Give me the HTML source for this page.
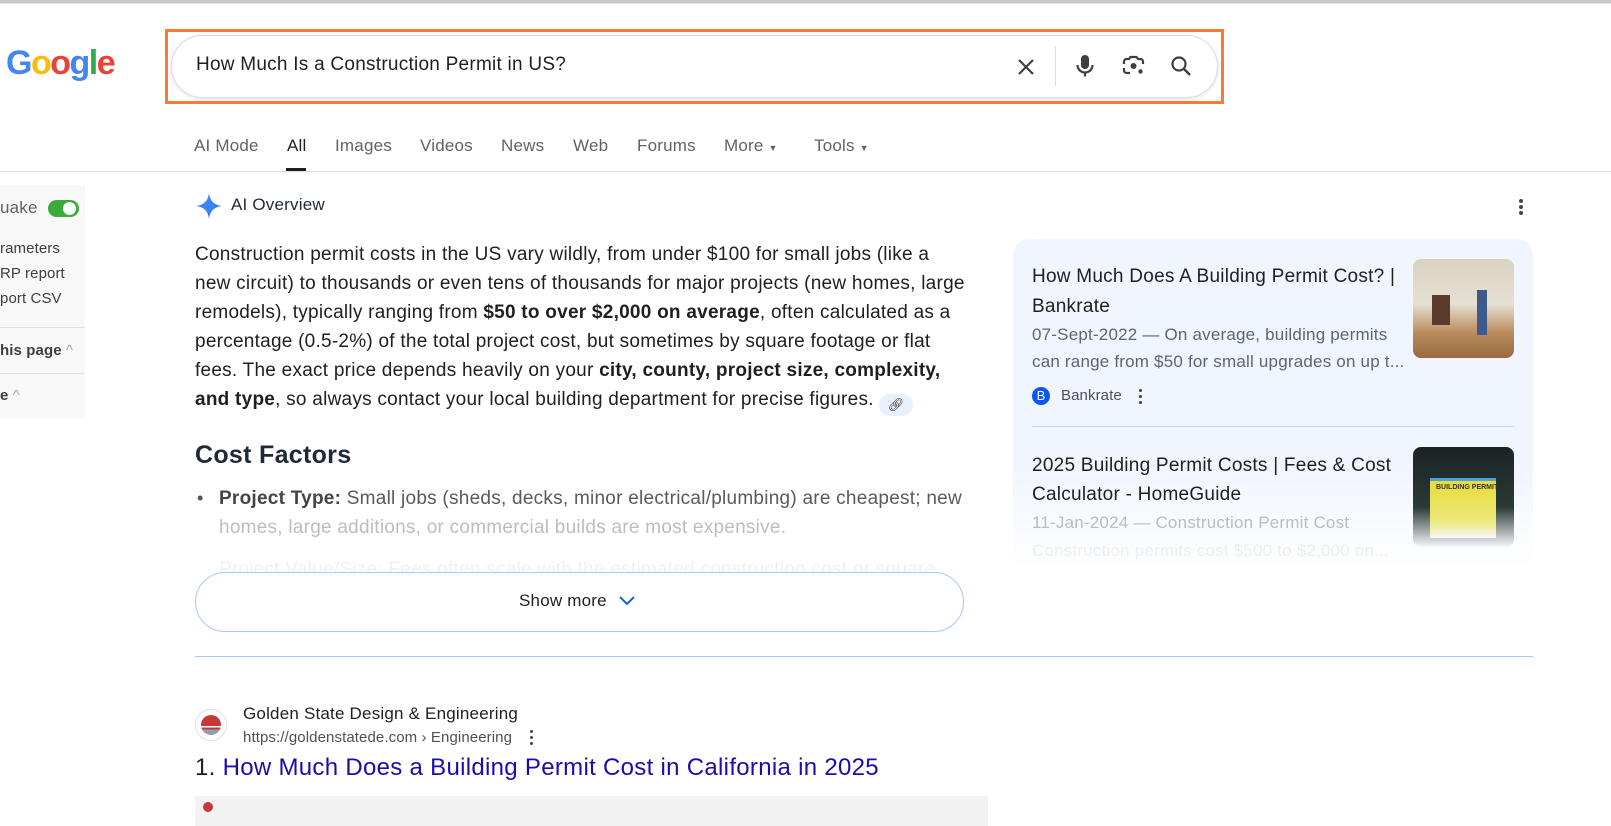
<!DOCTYPE html>
<html><head><meta charset="utf-8"><style>
*{margin:0;padding:0;box-sizing:border-box}
body{width:1611px;height:826px;overflow:hidden;background:#fff;font-family:"Liberation Sans",Arial,sans-serif;position:relative;color:#1f1f1f}
.a{position:absolute;white-space:nowrap}
.body{font-size:19px;letter-spacing:0.25px;line-height:29px;color:#1f1f1f}
.t16{font-size:17px;letter-spacing:0.2px}
.t14{font-size:15px;letter-spacing:0.1px}
</style></head><body>
<div class="a" style="left:0;top:0;width:1611px;height:3px;background:#c8c8c8"></div>
<div class="a" style="left:0;top:3px;width:1611px;height:1px;background:#e6e6e6"></div>
<div class="a" style="left:6px;top:44px;font-size:34px;letter-spacing:-1.5px;font-weight:bold"><span style="color:#4285f4">G</span><span style="color:#fbbc05">o</span><span style="color:#ea4335">o</span><span style="color:#4285f4">g</span><span style="color:#34a853">l</span><span style="color:#ea4335">e</span></div>
<div class="a" style="left:165px;top:29px;width:1059px;height:75px;border:3px solid #fb7a35"></div>
<div class="a" style="left:171px;top:35px;width:1047px;height:63px;border:1px solid #dadce0;border-radius:32px;box-shadow:0 1px 4px rgba(0,0,0,.12);background:#fff"></div>
<div class="a" style="left:196px;top:54px;font-size:19px;letter-spacing:0.25px;color:#1f1f1f">How Much Is a Construction Permit in US?</div>
<svg class="a" style="left:1014px;top:55px" width="24" height="24" viewBox="0 0 24 24"><path d="M5 5L19 19M19 5L5 19" stroke="#3c4043" stroke-width="2.2"/></svg>
<div class="a" style="left:1055px;top:46px;width:1px;height:40px;background:#dadce0"></div>
<svg class="a" style="left:1073px;top:53px" width="24" height="26" viewBox="0 0 24 26"><rect x="8" y="2" width="8" height="14" rx="4" fill="#3c4043"/><path d="M4.5 12a7.5 7.5 0 0 0 15 0" stroke="#3c4043" stroke-width="2.2" fill="none"/><path d="M12 19.5v4" stroke="#3c4043" stroke-width="2.2"/></svg>
<svg class="a" style="left:1121px;top:54px" width="25" height="24" viewBox="0 0 25 24"><path d="M3 10V7.5A2.5 2.5 0 0 1 5.5 5H8l1.5-2h6L17 5h2.5A2.5 2.5 0 0 1 22 7.5V10M3 14v2.5A2.5 2.5 0 0 0 5.5 19H9" stroke="#3c4043" stroke-width="2.2" fill="none"/><circle cx="12.5" cy="12" r="3" fill="#3c4043"/><circle cx="19.5" cy="17.5" r="2.2" fill="#3c4043"/></svg>
<svg class="a" style="left:1169px;top:54px" width="24" height="24" viewBox="0 0 24 24"><circle cx="10" cy="10" r="6.5" stroke="#3c4043" stroke-width="2.2" fill="none"/><path d="M15 15l6 6" stroke="#3c4043" stroke-width="2.4"/></svg>
<div class="a t16" style="left:194px;top:136px;color:#5f6368">AI Mode</div>
<div class="a t16" style="left:287px;top:136px;color:#1f1f1f">All</div>
<div class="a" style="left:286px;top:168px;width:20px;height:3px;background:#1f1f1f"></div>
<div class="a t16" style="left:335px;top:136px;color:#5f6368">Images</div>
<div class="a t16" style="left:420px;top:136px;color:#5f6368">Videos</div>
<div class="a t16" style="left:501px;top:136px;color:#5f6368">News</div>
<div class="a t16" style="left:573px;top:136px;color:#5f6368">Web</div>
<div class="a t16" style="left:637px;top:136px;color:#5f6368">Forums</div>
<div class="a t16" style="left:724px;top:136px;color:#5f6368">More <span style="font-size:9px">▼</span></div>
<div class="a t16" style="left:814px;top:136px;color:#5f6368">Tools <span style="font-size:9px">▼</span></div>
<div class="a" style="left:0;top:171px;width:1611px;height:1px;background:#dadce0"></div>
<div class="a" style="left:0;top:185px;width:85px;height:233px;background:#f8f8f8"></div>
<div class="a t16" style="left:0;top:198px;color:#5f6368">uake</div>
<div class="a" style="left:48px;top:200px;width:31px;height:17px;border-radius:9px;background:#3cab3c"></div>
<div class="a" style="left:63px;top:202px;width:13px;height:13px;border-radius:50%;background:#fff"></div>
<div class="a t14" style="left:0;top:240px;color:#3c4043">rameters</div>
<div class="a t14" style="left:0;top:265px;color:#3c4043">RP report</div>
<div class="a t14" style="left:0;top:290px;color:#3c4043">port CSV</div>
<div class="a" style="left:0;top:327px;width:85px;height:1px;background:#e0e0e0"></div>
<div class="a t14" style="left:0;top:342px;font-weight:bold;color:#3c4043">his page <span style="color:#aaa;font-weight:normal">^</span></div>
<div class="a" style="left:0;top:373px;width:85px;height:1px;background:#e0e0e0"></div>
<div class="a t14" style="left:0;top:387px;font-weight:bold;color:#3c4043">e <span style="color:#aaa;font-weight:normal">^</span></div>
<svg class="a" style="left:195px;top:192px" width="28" height="28" viewBox="0 0 28 28"><path d="M14 1C15 9 19 13 27 14C19 15 15 19 14 27C13 19 9 15 1 14C9 13 13 9 14 1Z" fill="#3b82f6"/></svg>
<div class="a t16" style="left:231px;top:195px;color:#1f2937">AI Overview</div>
<div class="a" style="left:1513px;top:198px;width:16px;height:20px;font-size:0">
<div style="margin:0 auto;width:4px;height:4px;border-radius:50%;background:#444;margin-top:1px"></div><div style="margin:2px auto;width:4px;height:4px;border-radius:50%;background:#444"></div><div style="margin:0 auto;width:4px;height:4px;border-radius:50%;background:#444"></div></div>
<div class="a body" style="left:195px;top:240px;white-space:nowrap">Construction permit costs in the US vary wildly, from under $100 for small jobs (like a<br>new circuit) to thousands or even tens of thousands for major projects (new homes, large<br>remodels), typically ranging from <b>$50 to over $2,000 on average</b>, often calculated as a<br>percentage (0.5-2%) of the total project cost, but sometimes by square footage or flat<br>fees. The exact price depends heavily on your <b>city, county, project size, complexity,</b><br><b>and type</b>, so always contact your local building department for precise figures. <span style="display:inline-block;width:34px;height:22px;border-radius:11px;background:#e8effd;vertical-align:-4px;text-align:center;font-size:13px;line-height:22px;color:#333">🔗︎</span></div>
<div class="a" style="left:195px;top:441px;font-size:25px;letter-spacing:0.3px;font-weight:bold;color:#1f2937">Cost Factors</div>
<div class="a" style="left:197px;top:488px;font-size:18px;color:#555">•</div>
<div class="a body" style="left:219px;top:484px;color:#5a5a5a"><b style="color:#444">Project Type:</b> Small jobs (sheds, decks, minor electrical/plumbing) are cheapest; new</div>
<div class="a body" style="left:219px;top:513px;color:#bdbdbd">homes, large additions, or commercial builds are most expensive.</div>
<div class="a body" style="left:219px;top:555px;color:#f0f0f0">Project Value/Size: Fees often scale with the estimated construction cost or square</div>
<div class="a" style="left:195px;top:572px;width:769px;height:60px;border:1px solid #a8c7fa;border-radius:30px;background:#fff"></div>
<div class="a t16" style="left:519px;top:591px;color:#1f1f1f">Show more</div>
<svg class="a" style="left:618px;top:593px" width="18" height="16" viewBox="0 0 18 16"><path d="M2 4l7 7 7-7" stroke="#1a5fd6" stroke-width="2" fill="none"/></svg>
<div class="a" style="left:1013px;top:239px;width:520px;height:330px;border-radius:16px;background:linear-gradient(#f1f5fe 0,#f1f5fe 230px,#fff 330px)"></div>
<div class="a" style="left:1032px;top:262px;font-size:19px;letter-spacing:0.25px;line-height:30px;color:#1f1f1f">How Much Does A Building Permit Cost? |<br>Bankrate</div>
<div class="a t16" style="left:1032px;top:321px;line-height:27px;color:#5f6473">07-Sept-2022 — On average, building permits<br>can range from $50 for small upgrades on up t...</div>
<div class="a" style="left:1032px;top:387px;width:18px;height:18px;border-radius:50%;background:#0b57f0;color:#fff;font-size:13px;text-align:center;line-height:18px">B</div>
<div class="a t14" style="left:1061px;top:387px;color:#4d5156">Bankrate</div>
<div class="a" style="left:1139px;top:389px;font-size:0"><div style="width:3px;height:3px;border-radius:50%;background:#444"></div><div style="width:3px;height:3px;border-radius:50%;background:#444;margin:3px 0"></div><div style="width:3px;height:3px;border-radius:50%;background:#444"></div></div>
<div class="a" style="left:1413px;top:259px;width:101px;height:99px;border-radius:8px;background:linear-gradient(180deg,#d9d2c0 0,#e5e0d4 45%,#b98a5a 75%,#9a6a3f 100%)"></div>
<div class="a" style="left:1432px;top:295px;width:18px;height:30px;background:#5a3a2a"></div>
<div class="a" style="left:1477px;top:290px;width:10px;height:45px;background:#3d5b8a"></div>
<div class="a" style="left:1032px;top:426px;width:482px;height:1px;background:#c6dafc"></div>
<div class="a" style="left:1032px;top:451px;font-size:19px;letter-spacing:0.25px;line-height:29px;color:#1f1f1f">2025 Building Permit Costs | Fees &amp; Cost<br>Calculator - HomeGuide</div>
<div class="a t16" style="left:1032px;top:509px;line-height:28px;color:#b8bcc4">11-Jan-2024 — Construction Permit Cost<br><span style="color:#eceef2">Construction permits cost $500 to $2,000 on...</span></div>
<div class="a" style="left:1413px;top:447px;width:101px;height:100px;border-radius:8px;background:linear-gradient(180deg,#1b2226 0,#2a3a35 60%,#f6f7fb 100%)"></div>
<div class="a" style="left:1430px;top:478px;width:66px;height:60px;background:linear-gradient(180deg,#e8dc3a 0,#ece87a 70%,#f6f7fb 100%);border-top:3px solid #4ea0e0"></div>
<div class="a" style="left:1436px;top:484px;font-size:7px;font-weight:bold;color:#333">BUILDING PERMIT</div>
<div class="a" style="left:195px;top:656px;width:1338px;height:1px;background:#a8c7fa"></div>
<div class="a" style="left:195px;top:709px;width:32px;height:32px;border-radius:50%;border:1px solid #e0e0e0;background:#fff"></div>
<div class="a" style="left:201px;top:715px;width:20px;height:20px;border-radius:50%;background:linear-gradient(#c8383b 0,#c8383b 55%,#fff 55%,#fff 62%,#c8383b 62%,#c8383b 72%,#8fa0b0 72%)"></div>
<div class="a t16" style="left:243px;top:704px;color:#1f1f1f">Golden State Design &amp; Engineering</div>
<div class="a t14" style="left:243px;top:729px;color:#4d5156">https://goldenstatede.com › Engineering</div>
<div class="a" style="left:530px;top:730px;font-size:0"><div style="width:3px;height:3px;border-radius:50%;background:#444"></div><div style="width:3px;height:3px;border-radius:50%;background:#444;margin:3px 0"></div><div style="width:3px;height:3px;border-radius:50%;background:#444"></div></div>
<div class="a" style="left:195px;top:754px;font-size:24px;letter-spacing:0.3px;color:#1a0dab"><span style="color:#1f1f1f">1. </span>How Much Does a Building Permit Cost in California in 2025</div>
<div class="a" style="left:195px;top:796px;width:793px;height:30px;background:#f2f2f2"></div>
<div class="a" style="left:203px;top:802px;width:10px;height:10px;border-radius:50%;background:#c8383b"></div>
</body></html>
